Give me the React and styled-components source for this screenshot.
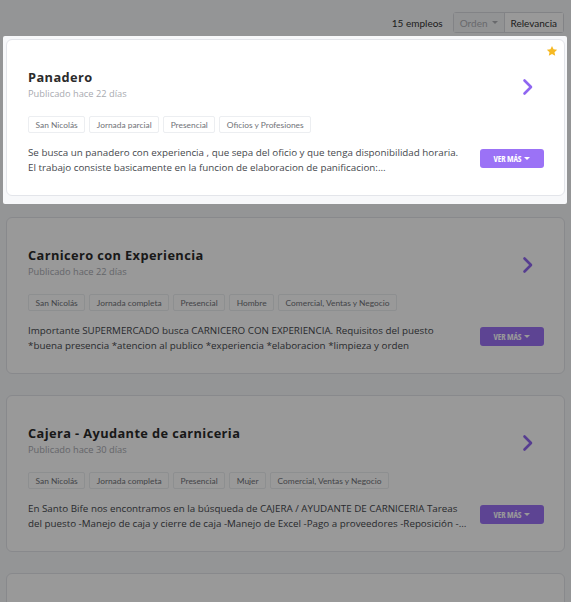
import React from "react";
import styled, { createGlobalStyle } from "styled-components";

const GlobalStyle = createGlobalStyle`
  html, body { margin: 0; padding: 0; }
  body {
    background: #f7f8fa;
    overflow: hidden;
    font-family: "Open Sans", "Noto Sans", sans-serif;
  }
`;

const Page = styled.div`
  padding: 12px 6px 0 6px;
`;

const TopBar = styled.div`
  display: flex;
  justify-content: flex-end;
  align-items: center;
  gap: 10px;
  height: 21px;
  margin-bottom: 6px;
  padding-right: 1px;
`;

const Count = styled.span`
  font-family: "Lato", "Open Sans", sans-serif;
  font-size: 10px;
  color: #333;
`;

const SortGroup = styled.div`
  display: flex;
  height: 21px;
  border: 1px solid #d9dbe0;
  border-radius: 3px;
  box-sizing: border-box;
  background: #fff;
`;

const SortItem = styled.div`
  display: flex;
  align-items: center;
  gap: 4px;
  padding: 0 ${(p) => (p.$muted ? "6px" : "6px")};
  font-family: "Lato", "Open Sans", sans-serif;
  font-size: 10px;
  color: ${(p) => (p.$muted ? "#aeb0b5" : "#333")};
  background: ${(p) => (p.$muted ? "#f4f5f7" : "#fff")};
  border-left: ${(p) => (p.$divider ? "1px solid #d9dbe0" : "none")};
`;

const Caret = styled.span`
  width: 0;
  height: 0;
  border-left: 3px solid transparent;
  border-right: 3px solid transparent;
  border-top: 3px solid currentColor;
`;

const List = styled.div`
  display: flex;
  flex-direction: column;
  gap: 21px;
`;

const Spotlight = styled.div`
  position: relative;
  z-index: 10;
  margin: -3px -2px -8px -3px;
  padding: 3px 2px 8px 3px;
  background: #f7f8fa;
  border-radius: 2px;
  box-shadow: 0 0 0 3000px rgba(0, 0, 0, 0.4);
`;

const Card = styled.div`
  position: relative;
  background: #fff;
  border: 1px solid #e3e5ea;
  border-radius: 6px;
  padding: 28px 20px 20px 21px;
  height: 157px;
  box-sizing: border-box;
`;

const Star = styled.svg`
  position: absolute;
  top: 5px;
  right: 6px;
`;

const Head = styled.div`
  display: flex;
  align-items: center;
  justify-content: space-between;
`;

const Titles = styled.div`
  display: flex;
  flex-direction: column;
`;

const Title = styled.div`
  font-size: 12.8px;
  line-height: 18px;
  font-weight: 700;
  letter-spacing: 0.4px;
  color: #2b2b2b;
`;

const Posted = styled.div`
  font-size: 9.3px;
  line-height: 14px;
  margin-top: 1px;
  color: #a8aab0;
`;

const Chevron = styled.svg`
  margin-right: 10px;
  margin-top: 4px;
`;

const Tags = styled.div`
  display: flex;
  gap: 4px;
  margin-top: 15px;
`;

const Tag = styled.span`
  display: flex;
  align-items: center;
  height: 17px;
  box-sizing: border-box;
  padding: 0 6.5px;
  border: 1px solid #eceef1;
  border-radius: 2px;
  background: #fff;
  font-family: "Lato", "Open Sans", sans-serif;
  font-size: 8.4px;
  color: #707278;
`;

const Body = styled.div`
  display: flex;
  align-items: center;
  gap: 5px;
  margin-top: 12px;
`;

const Desc = styled.p`
  flex: 1;
  margin: 0;
  font-size: 9.8px;
  line-height: 15px;
  color: #45474d;
  white-space: pre-line;
  display: -webkit-box;
  -webkit-line-clamp: 2;
  -webkit-box-orient: vertical;
  overflow: hidden;
`;

const More = styled.button`
  flex: none;
  display: flex;
  align-items: center;
  justify-content: center;
  gap: 3px;
  width: 64px;
  height: 19px;
  margin-top: -3px;
  border: none;
  border-radius: 3px;
  background: #9b72f6;
  color: #fff;
  font-family: "Open Sans", sans-serif;
  font-stretch: 85%;
  font-size: 8.5px;
  font-weight: 700;
  letter-spacing: -0.1px;
  padding: 0;
`;

const jobs = [
  {
    title: "Panadero",
    posted: "Publicado hace 22 días",
    tags: ["San Nicolás", "Jornada parcial", "Presencial", "Oficios y Profesiones"],
    desc: "Se busca un panadero con experiencia , que sepa del oficio y que tenga disponibilidad horaria.\nEl trabajo consiste basicamente en la funcion de elaboracion de panificacion:\nelaboracion de pan, facturas y masas finas.",
    featured: true,
  },
  {
    title: "Carnicero con Experiencia",
    posted: "Publicado hace 22 días",
    tags: ["San Nicolás", "Jornada completa", "Presencial", "Hombre", "Comercial, Ventas y Negocio"],
    desc: "Importante SUPERMERCADO busca CARNICERO CON EXPERIENCIA. Requisitos del puesto\n*buena presencia *atencion al publico *experiencia *elaboracion *limpieza y orden",
  },
  {
    title: "Cajera - Ayudante de carniceria",
    posted: "Publicado hace 30 días",
    tags: ["San Nicolás", "Jornada completa", "Presencial", "Mujer", "Comercial, Ventas y Negocio"],
    desc: "En Santo Bife nos encontramos en la búsqueda de CAJERA / AYUDANTE DE CARNICERIA Tareas\ndel puesto -Manejo de caja y cierre de caja -Manejo de Excel -Pago a proveedores -Reposición -Atención al cliente",
  },
  {
    title: "Vendedor de mostrador",
    posted: "Publicado hace 31 días",
    tags: ["San Nicolás", "Jornada completa", "Presencial"],
    desc: "Buscamos vendedor de mostrador con experiencia.",
  },
];

function JobCard({ job }) {
  return (
    <Card>
      {job.featured && (
        <Star width="12" height="12" viewBox="0 0 24 24">
          <path
            d="M12 1.8l3.1 6.6 7.2.9-5.3 5 1.4 7.1L12 17.9l-6.4 3.5 1.4-7.1-5.3-5 7.2-.9z"
            fill="#f6b923"
          />
        </Star>
      )}
      <Head>
        <Titles>
          <Title>{job.title}</Title>
          <Posted>{job.posted}</Posted>
        </Titles>
        <Chevron width="12" height="18" viewBox="0 0 12 18">
          <path d="M2.5 2.5l6.5 6.5-6.5 6.5" fill="none" stroke="#8f66f1" strokeWidth="2.6" strokeLinecap="round" strokeLinejoin="round" />
        </Chevron>
      </Head>
      <Tags>
        {job.tags.map((t) => (
          <Tag key={t}>{t}</Tag>
        ))}
      </Tags>
      <Body>
        <Desc>{job.desc}</Desc>
        <More>
          VER MÁS <Caret />
        </More>
      </Body>
    </Card>
  );
}

export default function App() {
  return (
    <Page>
      <GlobalStyle />
      <TopBar>
        <Count>15 empleos</Count>
        <SortGroup>
          <SortItem $muted>
            Orden <Caret />
          </SortItem>
          <SortItem $divider>Relevancia</SortItem>
        </SortGroup>
      </TopBar>
      <List>
        {jobs.map((job, i) =>
          i === 0 ? (
            <Spotlight key={job.title}>
              <JobCard job={job} />
            </Spotlight>
          ) : (
            <JobCard key={job.title} job={job} />
          )
        )}
      </List>
    </Page>
  );
}
